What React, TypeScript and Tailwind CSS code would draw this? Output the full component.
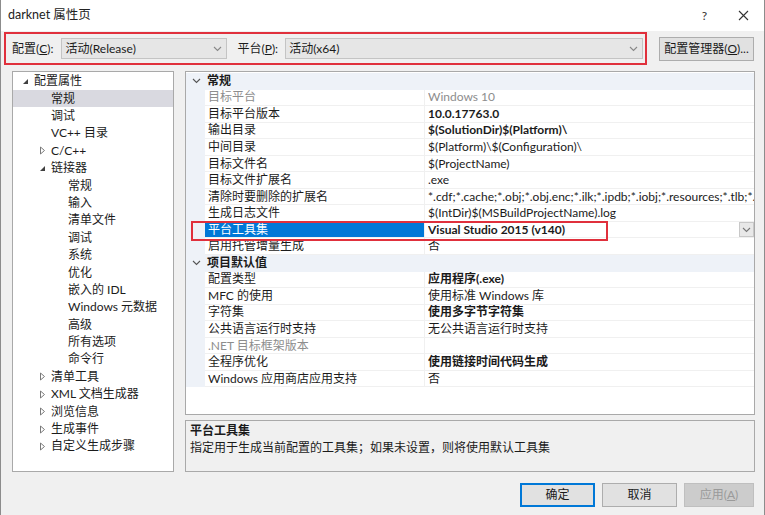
import React from "react";

const FONT = { fontFamily: 'Lato, "Noto Sans CJK SC", sans-serif' };

function Expanded() {
  return (
    <svg width="7" height="7" viewBox="0 0 7 7" className="shrink-0">
      <path d="M6 1 L6 6 L1 6 Z" fill="#404040" />
    </svg>
  );
}
function Collapsed() {
  return (
    <svg width="7" height="9" viewBox="0 0 7 9" className="shrink-0">
      <path d="M1.5 1 L5.5 4.5 L1.5 8 Z" fill="none" stroke="#7a7a7a" strokeWidth="1" />
    </svg>
  );
}
function Chevron({ color = "#606060" }: { color?: string }) {
  return (
    <svg width="9" height="6" viewBox="0 0 9 6">
      <path d="M1 1 L4.5 4.5 L8 1" fill="none" stroke={color} strokeWidth="1.1" />
    </svg>
  );
}

type TreeItem = { label: string; level: number; exp?: "open" | "closed"; sel?: boolean };
const tree: TreeItem[] = [
  { label: "配置属性", level: 0, exp: "open" },
  { label: "常规", level: 1, sel: true },
  { label: "调试", level: 1 },
  { label: "VC++ 目录", level: 1 },
  { label: "C/C++", level: 1, exp: "closed" },
  { label: "链接器", level: 1, exp: "open" },
  { label: "常规", level: 2 },
  { label: "输入", level: 2 },
  { label: "清单文件", level: 2 },
  { label: "调试", level: 2 },
  { label: "系统", level: 2 },
  { label: "优化", level: 2 },
  { label: "嵌入的 IDL", level: 2 },
  { label: "Windows 元数据", level: 2 },
  { label: "高级", level: 2 },
  { label: "所有选项", level: 2 },
  { label: "命令行", level: 2 },
  { label: "清单工具", level: 1, exp: "closed" },
  { label: "XML 文档生成器", level: 1, exp: "closed" },
  { label: "浏览信息", level: 1, exp: "closed" },
  { label: "生成事件", level: 1, exp: "closed" },
  { label: "自定义生成步骤", level: 1, exp: "closed" },
];

type Row =
  | { kind: "header"; label: string }
  | { kind: "prop"; name: string; value: string; bold?: boolean; gray?: boolean; grayName?: boolean; sel?: boolean };

const rows: Row[] = [
  { kind: "header", label: "常规" },
  { kind: "prop", name: "目标平台", value: "Windows 10", gray: true, grayName: true },
  { kind: "prop", name: "目标平台版本", value: "10.0.17763.0", bold: true },
  { kind: "prop", name: "输出目录", value: "$(SolutionDir)$(Platform)\\", bold: true },
  { kind: "prop", name: "中间目录", value: "$(Platform)\\$(Configuration)\\" },
  { kind: "prop", name: "目标文件名", value: "$(ProjectName)" },
  { kind: "prop", name: "目标文件扩展名", value: ".exe" },
  {
    kind: "prop",
    name: "清除时要删除的扩展名",
    value: "*.cdf;*.cache;*.obj;*.obj.enc;*.ilk;*.ipdb;*.iobj;*.resources;*.tlb;*.tli;*.t",
  },
  { kind: "prop", name: "生成日志文件", value: "$(IntDir)$(MSBuildProjectName).log" },
  { kind: "prop", name: "平台工具集", value: "Visual Studio 2015 (v140)", bold: true, sel: true },
  { kind: "prop", name: "启用托管增量生成", value: "否" },
  { kind: "header", label: "项目默认值" },
  { kind: "prop", name: "配置类型", value: "应用程序(.exe)", bold: true },
  { kind: "prop", name: "MFC 的使用", value: "使用标准 Windows 库" },
  { kind: "prop", name: "字符集", value: "使用多字节字符集", bold: true },
  { kind: "prop", name: "公共语言运行时支持", value: "无公共语言运行时支持" },
  { kind: "prop", name: ".NET 目标框架版本", value: "", grayName: true },
  { kind: "prop", name: "全程序优化", value: "使用链接时间代码生成", bold: true },
  { kind: "prop", name: "Windows 应用商店应用支持", value: "否" },
];

export default function App() {
  return (
    <div
      className="w-[765px] h-[515px] bg-[#f0f0f0] border-l border-r border-[#8c8c8c] flex flex-col overflow-hidden text-[12px] text-[#1b1b1b]"
      style={FONT}
    >
      {/* title bar */}
      <div className="h-[31px] bg-white flex items-center pl-[7px] shrink-0">
        <span className="text-[12.5px] text-[#222]">darknet 属性页</span>
        <div className="flex-1" />
        <span className="text-[12px] text-[#333] mr-[31px]">?</span>
        <svg width="11" height="11" viewBox="0 0 11 11" className="mr-[15px]">
          <path d="M1 1 L10 10 M10 1 L1 10" stroke="#333" strokeWidth="1.1" />
        </svg>
      </div>

      {/* config row */}
      <div className="flex items-center pl-[3px] mt-[1px] shrink-0">
        <div className="w-[643px] h-[33px] border-2 border-[#e0303c] flex items-center pl-[6px]">
          <span>
            配置(<span className="underline">C</span>):
          </span>
          <div className="ml-[8px] w-[166px] h-[21px] bg-[#e6e6e6] border border-[#c4c4c4] flex items-center pl-[3px] pr-[4px]">
            <span className="flex-1">活动(Release)</span>
            <Chevron color="#888" />
          </div>
          <span className="ml-[10px]">
            平台(<span className="underline">P</span>):
          </span>
          <div className="ml-[7px] w-[358px] h-[21px] bg-[#e6e6e6] border border-[#c4c4c4] flex items-center pl-[3px] pr-[4px]">
            <span className="flex-1">活动(x64)</span>
            <Chevron color="#888" />
          </div>
        </div>
        <div className="ml-[12px] w-[95px] h-[24px] bg-[#e1e1e1] border border-[#adadad] flex items-center justify-center">
          配置管理器(<span className="underline">O</span>)...
        </div>
      </div>

      {/* main */}
      <div className="flex mt-[6px] pl-[11px] shrink-0">
        {/* tree */}
        <div className="w-[162px] h-[401px] bg-white border border-[#a9a9a9] pt-[0.5px] overflow-hidden">
          {tree.map((t, i) => (
            <div
              key={i}
              className={`h-[17.4px] flex items-center ${t.sel ? "bg-[#d9d9e0]" : ""}`}
              style={{ paddingLeft: 9 + t.level * 17 }}
            >
              <span className="w-[13px] flex items-center">
                {t.exp === "open" ? <Expanded /> : t.exp === "closed" ? <Collapsed /> : null}
              </span>
              <span className="ml-[-1px] whitespace-nowrap">{t.label}</span>
            </div>
          ))}
        </div>

        {/* right column */}
        <div className="ml-[11px] w-[570px] flex flex-col">
          <div className="h-[344px] bg-white border border-[#a9a9a9] overflow-hidden relative pt-[1px]">
            {rows.map((r, i) =>
              r.kind === "header" ? (
                <div key={i} className="h-[16.56px] flex items-center bg-[#eef2f8]">
                  <span className="w-[19px] flex justify-center pl-[1px]">
                    <Chevron color="#555" />
                  </span>
                  <span className="font-bold ml-[2px]">{r.label}</span>
                </div>
              ) : (
                <div key={i} className="h-[16.56px] flex items-stretch">
                  <span className="w-[19px] bg-[#eef2f8] shrink-0" />
                  <div
                    className={`w-[219px] shrink-0 flex items-center pl-[3px] border-b border-[#f0f0f0] whitespace-nowrap ${
                      r.sel ? "bg-[#0078d7] text-white" : r.grayName ? "text-[#8d8d8d]" : ""
                    }`}
                  >
                    {r.name}
                  </div>
                  <div
                    className={`flex-1 min-w-0 flex items-center pl-[3px] border-b border-l border-[#f0f0f0] whitespace-nowrap overflow-hidden ${
                      r.bold ? "font-bold" : ""
                    } ${r.gray ? "text-[#8d8d8d]" : ""}`}
                  >
                    <span className="flex-1 min-w-0 overflow-hidden">{r.value}</span>
                    {r.sel && (
                      <span className="w-[15px] h-[15px] bg-[#e8e8e8] border border-[#c8c8c8] flex items-center justify-center">
                        <Chevron color="#777" />
                      </span>
                    )}
                  </div>
                </div>
              )
            )}
            {/* highlight frame */}
            <div className="absolute left-[5px] top-[149px] w-[417px] h-[20px] border-2 border-[#e0303c] pointer-events-none" />
          </div>

          <div className="mt-[5px] h-[52px] bg-[#f0f0f0] border border-[#a9a9a9] px-[4px] pt-[1px]">
            <div className="font-bold leading-[17px]">平台工具集</div>
            <div className="leading-[17px]">指定用于生成当前配置的工具集；如果未设置，则将使用默认工具集</div>
          </div>
        </div>
      </div>

      {/* buttons */}
      <div className="flex justify-end gap-[7px] mt-[11px] pr-[10px] shrink-0">
        <div className="w-[75px] h-[24px] bg-[#e1e1e1] border-2 border-[#0078d7] flex items-center justify-center">确定</div>
        <div className="w-[75px] h-[24px] bg-[#e1e1e1] border border-[#adadad] flex items-center justify-center">取消</div>
        <div className="w-[70px] h-[24px] bg-[#cccccc] border border-[#bfbfbf] flex items-center justify-center text-[#9a9a9a]">
          应用(<span className="underline">A</span>)
        </div>
      </div>
    </div>
  );
}
